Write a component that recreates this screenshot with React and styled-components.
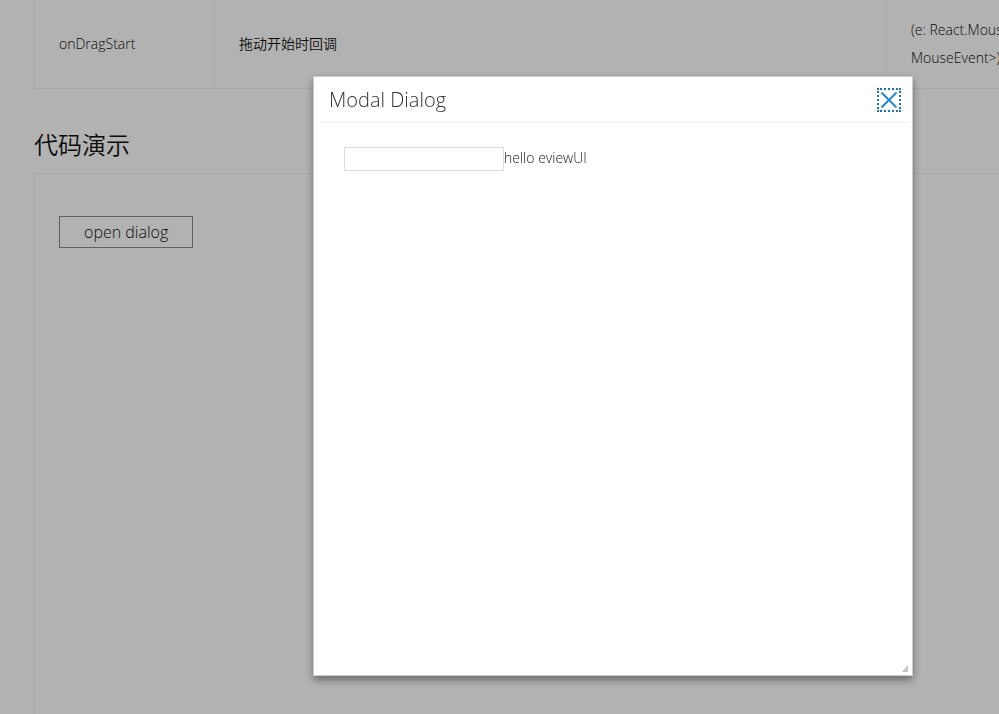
import React from "react";
import styled, { createGlobalStyle } from "styled-components";

const GlobalStyle = createGlobalStyle`
  *, *::before, *::after { box-sizing: border-box; }
  html { overflow: hidden; }
  body {
    margin: 0;
    background: #fff;
    color: #111;
    font-family: "Open Sans", "Noto Sans CJK SC", sans-serif;
    font-size: 14px;
    font-weight: 350;
    line-height: 28px;
  }
  button, input { font: inherit; color: inherit; }
`;

const Page = styled.main`
  min-height: 100vh;
  padding-left: 34px;
  display: flex;
  flex-direction: column;
  overflow: hidden;
`;

const ApiTable = styled.table`
  flex: none;
  width: 100%;
  min-width: 1080px;
  table-layout: fixed;
  border-collapse: separate;
  border-spacing: 0;
  border-left: 1px solid #f0f0f0;
`;

const Column = styled.col`
  width: ${({ $width }) => $width};
`;

const Cell = styled.td`
  height: 89px;
  padding: 16px 24px;
  border-right: 1px solid #f0f0f0;
  border-bottom: 1px solid #f0f0f0;
  text-align: left;
  vertical-align: middle;
  white-space: nowrap;
`;

const Heading = styled.h2`
  margin: 36px 0 8px;
  font-size: 24px;
  font-weight: 350;
  line-height: 40px;
`;

const Demo = styled.section`
  flex: 1;
  padding: 42px 24px;
  border: 1px solid #f0f0f0;
  border-width: 1px 0 0 1px;
`;

const OpenButton = styled.button`
  display: block;
  height: 32px;
  padding: 0 24px;
  border: 1px solid #8c8c8c;
  background: transparent;
  font-size: 16px;
  line-height: 30px;
`;

const Mask = styled.div`
  position: fixed;
  inset: 0;
  background: rgba(0, 0, 0, 0.3);
`;

const Dialog = styled.div`
  position: absolute;
  left: 313px;
  top: 76px;
  width: 600px;
  height: 600px;
  display: flex;
  flex-direction: column;
  border: 1px solid #ccc;
  background: #fff;
  color: #222;
  box-shadow: 0 4px 8px rgba(0, 0, 0, 0.4);
`;

const DialogHeader = styled.header`
  display: flex;
  align-items: center;
  justify-content: space-between;
  height: 46px;
  margin: 0 3px;
  padding: 0 8px 0 12px;
  border-bottom: 1px solid #f0f0f0;
`;

const DialogTitle = styled.h3`
  margin: 0;
  color: #333;
  font-size: 20px;
  font-weight: 350;
`;

const CloseButton = styled.button`
  display: flex;
  align-items: center;
  justify-content: center;
  width: 24px;
  height: 24px;
  padding: 0;
  border: 2px dotted #1f70b8;
  background: transparent;
  color: #2b87d3;
`;

const DialogBody = styled.div`
  flex: 1;
  display: flex;
  align-items: flex-start;
  padding: 24px 30px;
  line-height: 22px;
`;

const TextBox = styled.input`
  width: 160px;
  height: 24px;
  padding: 0 8px;
  border: 1px solid #ddd;
  background: #fff;
`;

const ResizeGrip = styled.svg`
  position: absolute;
  right: 4px;
  bottom: 3px;
  cursor: se-resize;
`;

export default function App() {
  return (
    <>
      <GlobalStyle />
      <Page>
        <ApiTable>
          <colgroup>
            <Column $width="180px" />
            <Column $width="672px" />
            <Column $width="auto" />
          </colgroup>
          <tbody>
            <tr>
              <Cell>onDragStart</Cell>
              <Cell>拖动开始时回调</Cell>
              <Cell>
                (e: React.Mous
                <br />
                MouseEvent&gt;)
              </Cell>
            </tr>
          </tbody>
        </ApiTable>
        <Heading>代码演示</Heading>
        <Demo>
          <OpenButton type="button">open dialog</OpenButton>
        </Demo>
      </Page>
      <Mask>
        <Dialog role="dialog" aria-modal="true" aria-labelledby="dialog-title">
          <DialogHeader>
            <DialogTitle id="dialog-title">Modal Dialog</DialogTitle>
            <CloseButton type="button" aria-label="Close">
              <svg width="16" height="16" viewBox="0 0 16 16" fill="none" stroke="currentColor" strokeWidth="2">
                <path d="M0.5 0.5 15.5 15.5M15.5 0.5 0.5 15.5" />
              </svg>
            </CloseButton>
          </DialogHeader>
          <DialogBody>
            <TextBox id="message" type="text" />
            <label htmlFor="message">hello eviewUI</label>
          </DialogBody>
          <ResizeGrip width="6" height="7" viewBox="0 0 6 7" aria-hidden="true">
            <path d="M6 0V7H0Z" fill="#c4c4c4" />
          </ResizeGrip>
        </Dialog>
      </Mask>
    </>
  );
}
